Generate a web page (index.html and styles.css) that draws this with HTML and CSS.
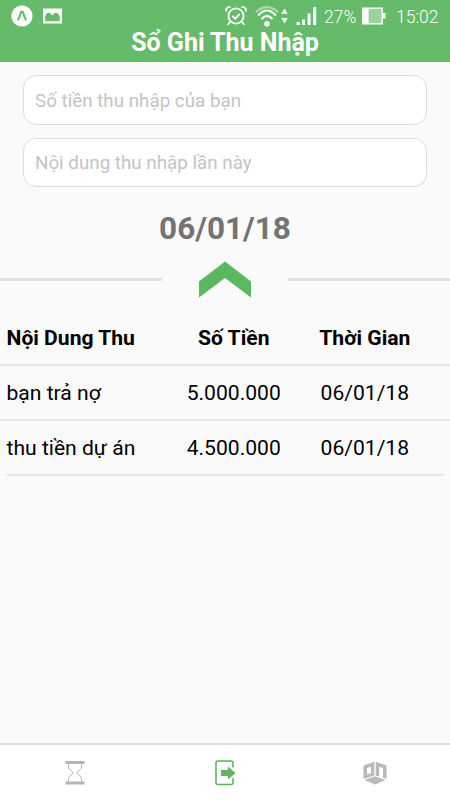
FILE: index.html
```
<!DOCTYPE html>
<html lang="vi">
<head>
  <meta charset="UTF-8" />
  <meta name="viewport" content="width=device-width, initial-scale=1.0" />
  <title>Sổ Ghi Thu Nhập</title>
  <link rel="stylesheet" href="styles.css">
</head>
<body>
  <header class="header">
    <div class="status-bar">
      <svg class="icon-expo" width="22" height="22" viewBox="0 0 22 22">
        <circle cx="11" cy="11" r="10.6" fill="#fff"/>
        <path d="M7 15.4L10.3 6.8h1.4L15 15.4" fill="none" stroke="#66bb6a" stroke-width="2"/>
      </svg>
      <svg class="icon-photo" width="19" height="16" viewBox="0 0 19 16">
        <path d="M0 .5h19v15H0z" fill="#fff"/>
        <path d="M2.2 13.2V8Q3.5 5 5.6 4.6 8 5.5 9.5 7.5 11 5 13 4.6 15.5 5 16.8 8.5v4.7z" fill="#66bb6a"/>
      </svg>
      <svg class="icon-alarm" width="22" height="20" viewBox="0 0 22 20" fill="none" stroke="#fff" stroke-width="1.8">
        <circle cx="11" cy="10" r="7.6"/>
        <path d="M7.3 9.8l2.8 2.8 4.7-4.8M1.2 5.4V3.2L3 1.2h2.6M20.8 5.4V3.2L19 1.2h-2.6M5.3 15.5l-2.6 3.3M16.7 15.5l2.6 3.3"/>
      </svg>
      <svg class="icon-wifi" width="34" height="21" viewBox="0 0 34 21" fill="none" stroke="#fff" stroke-width="2">
        <path d="M.8 6.2Q11.8-4 23.2 6.2" stroke-opacity=".45"/>
        <path d="M3.2 9.5Q12-.5 20.8 9.5M6.5 13Q12 7 17.5 13"/>
        <circle cx="12" cy="17.7" r="2.8" fill="#fff" stroke="none"/>
        <path d="M29.5 2.4l3.2 5.4h-6.4zM29.5 17.4L26.300 12h6.400z" fill="#fff" stroke="none"/>
      </svg>
      <svg class="icon-signal" width="21" height="18" viewBox="0 0 21 18" fill="#fff">
        <path d="M.5 15h3.200v3H.5zM6 12.500h3V18H6zM11.600 6.500h3V18h-3zM17.200.3h3V18h-3z"/>
      </svg>
      <span class="battery-text">27%</span>
      <svg class="icon-battery" width="24" height="18" viewBox="0 0 24 18">
        <path d="M.8 1.2h19.4v15.6H.8z" fill="#fff" fill-opacity=".35" stroke="#fff" stroke-width="1.4"/>
        <path d="M1 1h5.6v16H1zM21 6h2.6v5.5H21z" fill="#fff"/>
      </svg>
      <span class="clock">15:02</span>
    </div>
    <h1>Sổ Ghi Thu Nhập</h1>
  </header>

  <main class="content">
    <div class="form">
      <input type="text" placeholder="Số tiền thu nhập của bạn">
      <input type="text" placeholder="Nội dung thu nhập lần này">
    </div>

    <div class="date">06/01/18</div>

    <div class="divider">
      <span class="line"></span>
      <svg width="52" height="37" viewBox="0 0 52 37">
        <path d="M0 20.5L26 .5l26 20V36.5L26 17 0 36.5z" fill="#5cb860"/>
      </svg>
      <span class="line"></span>
    </div>

    <div class="list">
      <div class="row head">
        <span>Nội Dung Thu</span>
        <span>Số Tiền</span>
        <span>Thời Gian</span>
      </div>
      <div class="row">
        <span>bạn trả nợ</span>
        <span>5.000.000</span>
        <span>06/01/18</span>
      </div>
      <div class="row last">
        <span>thu tiền dự án</span>
        <span>4.500.000</span>
        <span>06/01/18</span>
      </div>
    </div>
  </main>

  <nav class="tabs">
    <a class="tab">
      <svg width="20" height="26" viewBox="0 0 20 26">
        <path d="M.5 1h19v3H.5zM.5 21.5h19v3H.5z" fill="#b5b5b5"/>
        <path d="M3.5 4v4.5l5 4.3-5 4.7V22M16.5 4v4.5l-5 4.3 5 4.7V22" fill="none" stroke="#b5b5b5"/>
      </svg>
    </a>
    <a class="tab">
      <svg width="22" height="26" viewBox="0 0 22 26">
        <path d="M19 7.5V3q0-2-2-2H4Q2 1 2 3v19.5q0 2 2 2h13q2 0 2-2V18" fill="none" stroke="#5aae5e" stroke-width="1.5"/>
        <path d="M7 10h7V6.5l7.5 6.5-7.5 6.5V16H7z" fill="#5cb860"/>
      </svg>
    </a>
    <a class="tab">
      <svg width="24" height="24" viewBox="0 0 24 24" fill="#b9b9b9">
        <path fill-rule="evenodd" d="M.5 4.5L11.3.8v13.7L.5 18zM4 7v6.5l4-1.3V5.7z"/>
        <path d="M12.7.8l10.8 3.7V18L20 16.8V7l-3.8-1.3v9.8l-3.5-1z"/>
        <path d="M1.5 19L12 15.3 22.5 19 12 23.5z"/>
      </svg>
    </a>
  </nav>
</body>
</html>
```
FILE: styles.css
```
* {
  box-sizing: border-box;
}

body {
  font-family: Roboto, sans-serif;
  background-color: #fafafa;
  color: #000;
  margin: 0;
  height: 100vh;
  display: flex;
  flex-direction: column;
}

.header {
  height: 62px;
  background-color: #66bb6a;
  color: white;
}

.status-bar {
  display: flex;
  align-items: center;
  height: 32px;
  padding-left: 11px;
  font-size: 17.5px;
}

.icon-photo {
  margin-left: 10px;
}

.icon-alarm {
  margin-left: 163px;
}

.icon-wifi {
  margin-left: 8px;
}

.icon-signal {
  margin-left: 7px;
}

.battery-text {
  width: 38px;
  margin-left: 7px;
}

.clock {
  margin-left: 10px;
}

.battery-text, .clock {
  font-weight: 300;
  padding-top: 1px;
}

h1 {
  margin: -3px 0 0;
  font-size: 25px;
  line-height: 28px;
  text-align: center;
}

.content {
  flex: 1;
}

.form {
  display: flex;
  flex-direction: column;
  gap: 13px;
  padding: 13px 23px 0;
}

input[type="text"] {
  width: 100%;
  height: 49.5px;
  padding: 2px 11px 0;
  font-family: inherit;
  font-size: 18.8px;
  background: white;
  border: 1px solid #ddd;
  border-radius: 13px;
}

input::placeholder {
  color: #c4c4c4;
}

.date {
  margin-top: 23px;
  font-size: 31.5px;
  line-height: 38px;
  font-weight: bold;
  text-align: center;
  color: #737373;
}

.divider {
  display: flex;
  align-items: center;
  justify-content: space-between;
  height: 37px;
  margin-top: 13px;
}

.line {
  width: 162px;
  height: 3px;
  background: #e1e1e1;
}

.list {
  margin-top: 13px;
}

.row {
  display: flex;
  align-items: center;
  height: 55px;
  padding: 0 6.5px;
  border-bottom: 2px solid #e6e6e6;
  font-size: 21.1px;
}

.row span {
  width: 30%;
  text-align: center;
}

.row span:first-child {
  width: 37%;
  text-align: left;
}

.head {
  font-weight: bold;
}

.last {
  margin: 0 6.5px;
  padding: 0;
}

.tabs {
  display: flex;
  height: 57px;
  background: white;
  border-top: 2px solid #dedede;
}

.tab {
  flex: 1;
  display: flex;
  align-items: center;
  justify-content: center;
}
```
